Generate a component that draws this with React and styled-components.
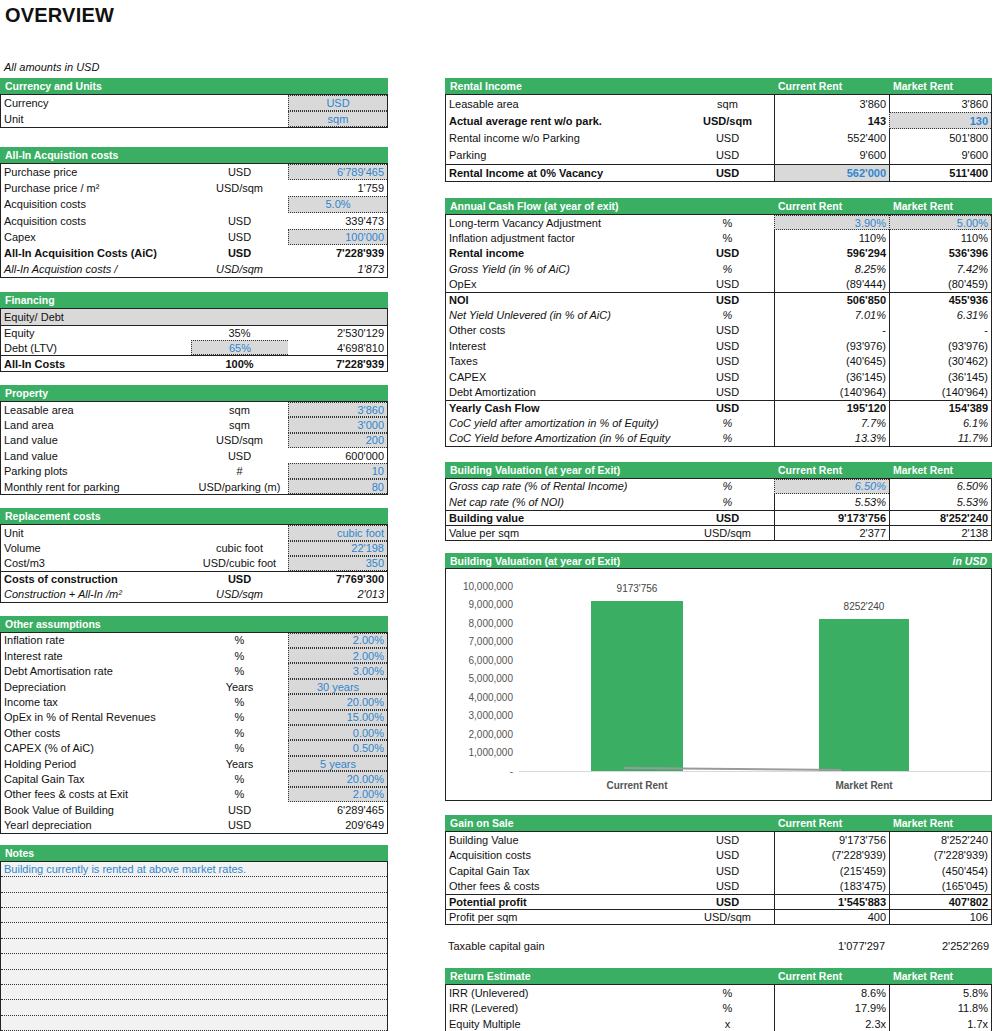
import React from "react";
import styled, { createGlobalStyle, css } from "styled-components";

const G = createGlobalStyle`
  body { margin: 0; background: #fff; font-family: "Liberation Sans", Arial, sans-serif; color: #111; }
`;
const GREEN = "#3aaf64";
const BLUE = "#2f86cf";

const Page = styled.div`width: 994px; height: 1031px; overflow: hidden;`;
const Title = styled.h1`margin: 0; height: 58px; padding: 4px 0 0 5px; box-sizing: border-box; font-size: 20px; font-weight: bold; letter-spacing: 0.2px;`;
const Cols = styled.div`display: grid; grid-template-columns: 388px 547px; column-gap: 57px; align-items: start;`;
const Col = styled.div`display: flex; flex-direction: column;`;
const Note = styled.div`height: 20px; line-height: 18px; font-size: 11px; font-style: italic; padding-left: 4px;`;
const Section = styled.div`margin-top: ${p => p.$mt || 0}px; border: 1px solid #222; border-top: none;`;
const Head = styled.div`
  display: grid; grid-template-columns: ${p => p.$cols}; height: ${p => p.$h || 16}px; align-items: center;
  background: ${GREEN}; color: #fff; font-weight: bold; font-size: 10.5px; margin: 0 -1px; padding: 0 1px;
  border-bottom: 1px solid #222;
`;
const HCell = styled.div`padding-left: ${p => p.$pl ?? 4}px; text-align: ${p => p.$right ? "right" : "left"}; padding-right: 4px; font-style: ${p => p.$it ? "italic" : "normal"};`;
const Row = styled.div`
  display: grid; grid-template-columns: ${p => p.$cols}; height: ${p => p.$h}px; box-sizing: border-box; font-size: 11px;
  font-weight: ${p => p.$b ? "bold" : "normal"}; font-style: ${p => p.$i ? "italic" : "normal"};
  background: ${p => p.$bg || "transparent"};
  ${p => p.$top && css`border-top: 1px solid #222;`}
`;
const Cell = styled.div`
  display: flex; align-items: center; white-space: nowrap; overflow: hidden; box-sizing: border-box; padding: 0 3px;
  justify-content: ${p => p.$align === "c" ? "center" : p.$align === "r" ? "flex-end" : "flex-start"};
  ${p => p.$sep && css`border-left: 1px solid #222;`}
  ${p => p.$shade && css`background: #d9d9d9;`}
  ${p => p.$input && css`color: ${BLUE}; border-top: 1px dotted #333; border-bottom: 1px dotted #333; border-left: 1px dotted #333;`}
  ${p => p.$blue && css`color: ${BLUE};`}
`;
const NoteRow = styled.div`height: 15.4px; box-sizing: border-box; border-bottom: 1px dotted #333; background: #f2f2f2; font-size: 11px; color: ${BLUE}; padding-left: 3px; line-height: 14px;`;
const ChartBox = styled.div`height: 231px; border-top: none;`;
const Plain = styled.div`display: grid; grid-template-columns: 235px 93px 115px 104px; height: 21px; align-items: center; margin-top: 10px; font-size: 11px;`;

const L_COLS = "190px 97px 1fr";
const R_COLS = "235px 93px 115px 1fr";

function norm(x) { return typeof x === "object" && x !== null ? x : { v: x }; }

function LTable({ title, rows, h, mt }) {
  return (
    <Section $mt={mt}>
      <Head $cols="1fr"><HCell>{title}</HCell></Head>
      {rows.map((r, i) => {
        const u = norm(r[1]); const v = norm(r[2]);
        return (
          <Row key={i} $cols={L_COLS} $h={h} $b={r[3]?.b} $i={r[3]?.i} $top={r[3]?.top} $bg={r[3]?.bg}>
            <Cell>{r[0]}</Cell>
            <Cell $align="c" $shade={u.in} $input={u.in}>{u.v}</Cell>
            <Cell $align={v.c ? "c" : "r"} $shade={v.in} $input={v.in}>{v.v}</Cell>
          </Row>
        );
      })}
    </Section>
  );
}

function RTable({ title, rows, h, mt }) {
  return (
    <Section $mt={mt}>
      <Head $cols={R_COLS}><HCell>{title}</HCell><div /><HCell>Current Rent</HCell><HCell>Market Rent</HCell></Head>
      {rows.map((r, i) => {
        const a = norm(r[2]); const b = norm(r[3]);
        return (
          <Row key={i} $cols={R_COLS} $h={h} $b={r[4]?.b} $i={r[4]?.i} $top={r[4]?.top}>
            <Cell>{r[0]}</Cell>
            <Cell $align="c">{r[1]}</Cell>
            <Cell $align="r" $sep $shade={a.in || a.sh} $input={a.in} $blue={a.sh}>{a.v}</Cell>
            <Cell $align="r" $sep $shade={b.in} $input={b.in}>{b.v}</Cell>
          </Row>
        );
      })}
    </Section>
  );
}

const I = v => ({ v, in: true });
const IC = v => ({ v, in: true, c: true });
const B = { b: true }, It = { i: true }, BT = { b: true, top: true };

function Chart() {
  const ticks = ["10,000,000", "9,000,000", "8,000,000", "7,000,000", "6,000,000", "5,000,000", "4,000,000", "3,000,000", "2,000,000", "1,000,000", "-"];
  return (
    <svg width="545" height="231" style={{ display: "block" }} fontFamily="Liberation Sans, Arial, sans-serif">
      {ticks.map((t, i) => (
        <text key={t} x="67" y={17 + i * 18.5 + 3.5} fontSize="10" fill="#555" textAnchor="end">{t}</text>
      ))}
      <line x1="73" y1="202.5" x2="545" y2="202.5" stroke="#d9d9d9" />
      <rect x="145" y="32" width="92" height="170" fill={GREEN} />
      <rect x="373" y="50" width="90" height="152" fill={GREEN} />
      <text x="191" y="23" fontSize="10" fill="#444" textAnchor="middle">9173'756</text>
      <text x="418" y="41" fontSize="10" fill="#444" textAnchor="middle">8252'240</text>
      <line x1="178" y1="199" x2="395" y2="201" stroke="#9a9a9a" strokeWidth="2" />
      <text x="191" y="220" fontSize="10" fontWeight="bold" fill="#555" textAnchor="middle">Current Rent</text>
      <text x="418" y="220" fontSize="10" fontWeight="bold" fill="#555" textAnchor="middle">Market Rent</text>
    </svg>
  );
}

export default function App() {
  return (
    <Page>
      <G />
      <Title>OVERVIEW</Title>
      <Cols>
        <Col>
          <Note>All amounts in USD</Note>
          <LTable title="Currency and Units" h={16} rows={[
            ["Currency", "", IC("USD")],
            ["Unit", "", IC("sqm")],
          ]} />
          <LTable title="All-In Acquistion costs" h={16.2} mt={19} rows={[
            ["Purchase price", "USD", I("6'789'465")],
            ["Purchase price / m²", "USD/sqm", "1'759"],
            ["Acquisition costs", "", IC("5.0%")],
            ["Acquisition costs", "USD", "339'473"],
            ["Capex", "USD", I("100'000")],
            ["All-In Acquisition Costs (AiC)", "USD", "7'228'939", B],
            ["All-In Acquistion costs  /", "USD/sqm", "1'873", It],
          ]} />
          <LTable title="Financing" h={15.4} mt={14} rows={[
            ["Equity/ Debt", "", "", { bg: "#d9d9d9" }],
            ["Equity", "35%", "2'530'129", { top: true }],
            ["Debt (LTV)", { v: "65%", in: true }, "4'698'810"],
            ["All-In Costs", "100%", "7'228'939", BT],
          ]} />
          <LTable title="Property" h={15.4} mt={13} rows={[
            ["Leasable area", "sqm", I("3'860")],
            ["Land area", "sqm", I("3'000")],
            ["Land value", "USD/sqm", I("200")],
            ["Land value", "USD", "600'000"],
            ["Parking plots", "#", I("10")],
            ["Monthly rent for parking", "USD/parking (m)", I("80")],
          ]} />
          <LTable title="Replacement costs" h={15.3} mt={13} rows={[
            ["Unit", "", I("cubic foot")],
            ["Volume", "cubic foot", I("22'198")],
            ["Cost/m3", "USD/cubic foot", I("350")],
            ["Costs of construction", "USD", "7'769'300", BT],
            ["Construction + All-In  /m²", "USD/sqm", "2'013", It],
          ]} />
          <LTable title="Other assumptions" h={15.4} mt={13} rows={[
            ["Inflation rate", "%", I("2.00%")],
            ["Interest rate", "%", I("2.00%")],
            ["Debt Amortisation rate", "%", I("3.00%")],
            ["Depreciation", "Years", IC("30 years")],
            ["Income tax", "%", I("20.00%")],
            ["OpEx in % of Rental Revenues", "%", I("15.00%")],
            ["Other costs", "%", I("0.00%")],
            ["CAPEX (% of AiC)", "%", I("0.50%")],
            ["Holding Period", "Years", IC("5 years")],
            ["Capital Gain Tax", "%", I("20.00%")],
            ["Other fees & costs at Exit", "%", I("2.00%")],
            ["Book Value of Building", "USD", "6'289'465"],
            ["Yearl depreciation", "USD", "209'649"],
          ]} />
          <Section $mt={11}>
            <Head $cols="1fr"><HCell>Notes</HCell></Head>
            {Array.from({ length: 11 }).map((_, i) => (
              <NoteRow key={i}>{i === 0 ? "Building currently is rented at above market rates." : ""}</NoteRow>
            ))}
          </Section>
        </Col>
        <Col>
          <RTable title="Rental Income" h={17.2} mt={20} rows={[
            ["Leasable area", "sqm", "3'860", "3'860"],
            ["Actual average rent w/o park.", "USD/sqm", "143", I("130"), B],
            ["Rental income w/o Parking", "USD", "552'400", "501'800"],
            ["Parking", "USD", "9'600", "9'600"],
            ["Rental Income at 0% Vacancy", "USD", { v: "562'000", sh: true }, "511'400", BT],
          ]} />
          <RTable title="Annual Cash Flow (at year of exit)" h={15.4} mt={16} rows={[
            ["Long-term Vacancy Adjustment", "%", I("3.90%"), I("5.00%")],
            ["Inflation adjustment factor", "%", "110%", "110%"],
            ["Rental income", "USD", "596'294", "536'396", B],
            ["Gross Yield (in % of AiC)", "%", "8.25%", "7.42%", It],
            ["OpEx", "USD", "(89'444)", "(80'459)"],
            ["NOI", "USD", "506'850", "455'936", BT],
            ["Net Yield Unlevered (in % of AiC)", "%", "7.01%", "6.31%", It],
            ["Other costs", "USD", "-", "-"],
            ["Interest", "USD", "(93'976)", "(93'976)"],
            ["Taxes", "USD", "(40'645)", "(30'462)"],
            ["CAPEX", "USD", "(36'145)", "(36'145)"],
            ["Debt Amortization", "USD", "(140'964)", "(140'964)"],
            ["Yearly Cash Flow", "USD", "195'120", "154'389", BT],
            ["CoC yield after amortization in % of Equity)", "%", "7.7%", "6.1%", It],
            ["CoC Yield before Amortization (in % of Equity", "%", "13.3%", "11.7%", It],
          ]} />
          <RTable title="Building Valuation (at year of Exit)" h={15.4} mt={15} rows={[
            ["Gross cap rate (% of Rental Income)", "%", I("6.50%"), "6.50%", It],
            ["Net cap rate (% of NOI)", "%", "5.53%", "5.53%", It],
            ["Building value", "USD", "9'173'756", "8'252'240", BT],
            ["Value per sqm", "USD/sqm", "2'377", "2'138", { top: true }],
          ]} />
          <Section $mt={12}>
            <Head $cols="1fr auto" $h={15}><HCell>Building Valuation (at year of Exit)</HCell><HCell $it>in USD</HCell></Head>
            <ChartBox><Chart /></ChartBox>
          </Section>
          <RTable title="Gain on Sale" h={15.3} mt={14} rows={[
            ["Building Value", "USD", "9'173'756", "8'252'240"],
            ["Acquisition costs", "USD", "(7'228'939)", "(7'228'939)"],
            ["Capital Gain Tax", "USD", "(215'459)", "(450'454)"],
            ["Other fees & costs", "USD", "(183'475)", "(165'045)"],
            ["Potential profit", "USD", "1'545'883", "407'802", BT],
            ["Profit per sqm", "USD/sqm", "400", "106", { top: true }],
          ]} />
          <Plain>
            <Cell>Taxable capital gain</Cell><div />
            <Cell $align="r">1'077'297</Cell><Cell $align="r">2'252'269</Cell>
          </Plain>
          <RTable title="Return Estimate" h={15.4} mt={12} rows={[
            ["IRR (Unlevered)", "%", "8.6%", "5.8%"],
            ["IRR (Levered)", "%", "17.9%", "11.8%"],
            ["Equity Multiple", "x", "2.3x", "1.7x"],
          ]} />
        </Col>
      </Cols>
    </Page>
  );
}
